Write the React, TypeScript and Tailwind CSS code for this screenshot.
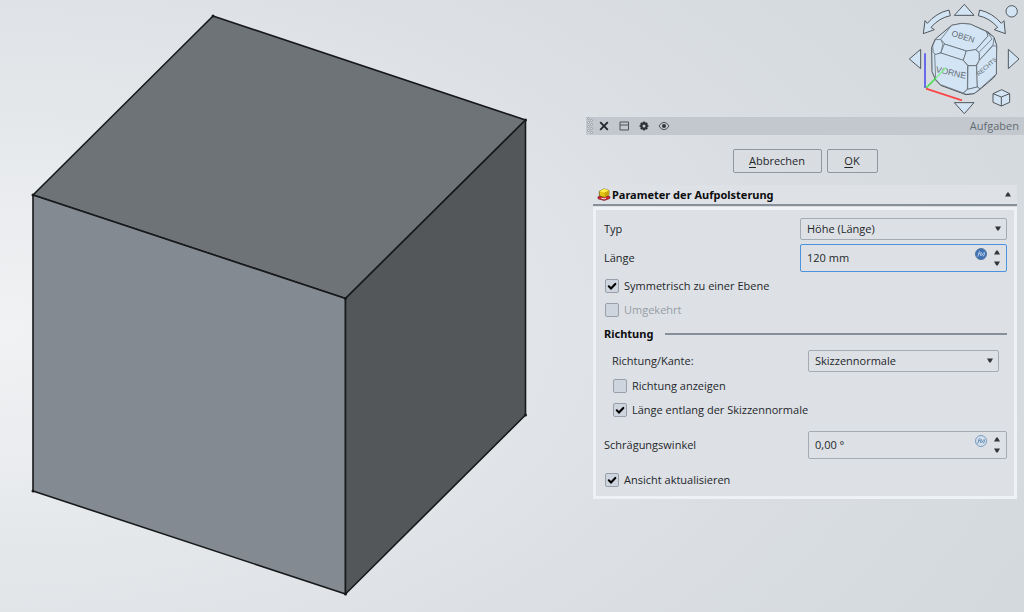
import { ReactNode, useState } from "react";

function Solid() {
  return (
    <svg viewBox="0 0 586 612" className="block h-auto w-full" role="img" aria-label="Aufpolsterung">
      <g stroke="#17191b" strokeWidth="1.600" strokeLinejoin="round">
        <polygon points="213,16 525.500,120 345.500,298.500 33,195" fill="#6e7377" />
        <polygon points="33,195 345.500,298.500 345.500,594 33,491" fill="#848a92" />
        <polygon points="525.500,120 525.500,415 345.500,594 345.500,298.500" fill="#535759" />
      </g>
      <g fill="#17191b">
        <circle cx="213" cy="16" r="1.500" />
        <circle cx="525.500" cy="120" r="1.500" />
        <circle cx="33" cy="195" r="1.500" />
        <circle cx="345.500" cy="298.500" r="1.500" />
        <circle cx="33" cy="491" r="1.500" />
        <circle cx="345.500" cy="594" r="1.500" />
        <circle cx="525.500" cy="415" r="1.500" />
      </g>
    </svg>
  );
}

function NavigationCube() {
  return (
    <svg viewBox="0 0 372 351" className="block h-[117px] w-[124px]" role="img" aria-label="Navigationswürfel">
      <g fill="#d3e5f4" stroke="#50565c" strokeWidth="3" strokeLinejoin="round">
        <polygon points="193,13 222,46 163,46" />
        <polygon points="193,341 222,308 163,308" />
        <polygon points="28,177 62,148 62,206" />
        <polygon points="357,177 325,148 325,206" />
        <circle cx="335" cy="34" r="17" />
        <path d="M147 30 L151 47 Q117 54 93 82 L103 89 L70 101 L75 62 L82 70 Q108 39 147 30Z" />
        <path d="M239 30 L235 47 Q269 54 293 82 L283 89 L316 101 L312 62 L304 70 Q278 39 239 30Z" />
        <path d="M305 269 L329 281 L329 307 L304 318 L279 307 L279 281Z" />
        <path d="M279 281 L304 291 L329 281 M304 291 V318" fill="none" />
        <path d="M155 76 L186 70 L212 73 L264 96 L282 112 L290 136 L289 222 L280 234 L240 268 L222 281 L198 284 L122 256 L107 240 L96 215 L95 142 L106 117Z" />
      </g>
      <g fill="#d3e5f4" stroke="#50565c" strokeWidth="2" strokeLinejoin="round">
        <polygon points="155,76 186,70 212,73 260,95 264,108 228,149 200,153 136,133 122,118" />
        <polygon points="133,132 199,153 190,181 122,159" />
        <polygon points="98,138 106,119 122,118 129,132 123,157 109,165 100,158" />
        <polygon points="104,164 123,159 190,181 203,197 202,268 190,279 122,254 107,238" />
        <polygon points="199,153 227,149 238,159 238,181 228,197 205,197 190,181" />
        <polygon points="204,197 230,197 232,261 203,268" />
        <polygon points="260,95 282,112 279,135 238,181 238,158 228,149 264,108" />
        <polyline points="238,156 276,117 264,98" fill="none" />
        <polygon points="230,197 238,181 279,137 290,139 289,222 240,266 232,261" />
        <polygon points="203,268 232,261 240,267 223,280 198,283 190,279" />
      </g>
      <g fill="#646c75" fontFamily="Liberation Sans, sans-serif">
        <text x="153" y="107" fontSize="25" transform="rotate(18 153 107)">OBEN</text>
        <text x="106" y="216" fontSize="26" transform="rotate(13 106 216)">VORNE</text>
        <text x="236" y="229" fontSize="18" transform="rotate(-41 236 229)">RECHTS</text>
      </g>
      <g fill="none" strokeWidth="5">
        <path d="M75 160 V264" stroke="#5454ea" />
        <path d="M78 264 L108 234" stroke="#42e04a" />
        <path d="M108 234 L138 203" stroke="#8eeb9c" />
        <path d="M78 266 L186 301" stroke="#fa4646" />
      </g>
    </svg>
  );
}

function Caret({ up = false }: { up?: boolean }) {
  return (
    <svg viewBox="0 0 6 5" className="block h-[5px] w-1.5" aria-hidden="true">
      <path d={up ? "M0 4.500 L2.300 .5 H3.700 L6 4.500Z" : "M0 .5 H6 L3.700 4.500 H2.300Z"} fill="#33373b" />
    </svg>
  );
}

function CheckRow({ label, on = false, disabled = false }: { label: string; on?: boolean; disabled?: boolean }) {
  const [checked, setChecked] = useState(on);
  return (
    <label
      className={disabled ? "flex h-6 items-center gap-[5px] pl-px text-[#969ca4]" : "flex h-6 items-center gap-[5px] pl-px"}
    >
      <span className="grid place-items-center">
        <input
          type="checkbox"
          checked={checked}
          disabled={disabled}
          onChange={(e) => setChecked(e.target.checked)}
          className="col-start-1 row-start-1 size-3.5 appearance-none rounded-xs border border-[#989fa8] bg-[#cfd5de]"
        />
        {checked && (
          <svg viewBox="0 0 10 10" className="pointer-events-none col-start-1 row-start-1 size-2.5" aria-hidden="true">
            <path d="M1.800 5.300 L4 7.400 L8.300 2.900" fill="none" stroke="#000" strokeWidth="2.100" strokeLinecap="round" />
          </svg>
        )}
      </span>
      {label}
    </label>
  );
}

function SelectBox({ id, value }: { id: string; value: string }) {
  return (
    <div className="grid items-center">
      <select
        id={id}
        className="col-start-1 row-start-1 h-[22px] w-full appearance-none rounded-xs border border-[#a5abb2] bg-[#dde1e6] pl-1.5 leading-5"
      >
        <option>{value}</option>
      </select>
      <span className="pointer-events-none col-start-1 row-start-1 mr-1.5 mb-0.5 justify-self-end">
        <Caret />
      </span>
    </div>
  );
}

function SpinBox({ id, value, active = false }: { id: string; value: string; active?: boolean }) {
  return (
    <div
      className={
        active
          ? "flex h-7 w-full rounded-xs border border-[#4b93dc] pr-1.5 pl-1.5"
          : "flex h-7 w-full rounded-xs border border-[#a5abb2] pr-1.5 pl-1.5"
      }
    >
      <input id={id} defaultValue={value} className="min-w-0 flex-1 bg-transparent outline-none" />
      <button type="button" aria-label="Formel" className="mt-[3px] mr-[7px] size-3">
        <svg viewBox="0 0 36 36" className="block size-3">
          <circle cx="18" cy="18" r="16.500" fill={active ? "#3f71b5" : "#d5dfea"} stroke={active ? "#54779f" : "#7b9cc0"} strokeWidth="3" />
          <g fill="none" stroke={active ? "#bcd2ec" : "#658eb9"} strokeWidth="2.800">
            <path d="M8 26 L13 11 H16 M10 17 H15" />
            <path d="M19 12 Q16 18 17 24 M20 16 L25 23 M25 16 L19 23 M27 12 Q31 18 25 25" />
          </g>
        </svg>
      </button>
      <span className="flex flex-col justify-between py-[5px]">
        <button type="button" aria-label="Erhöhen">
          <Caret up />
        </button>
        <button type="button" aria-label="Verringern">
          <Caret />
        </button>
      </span>
    </div>
  );
}

function Field({ id, label, children }: { id: string; label: string; children: ReactNode }) {
  return (
    <div className="flex items-center">
      <label htmlFor={id} className="flex-1">
        {label}
      </label>
      {children}
    </div>
  );
}

function PadIcon() {
  return (
    <svg viewBox="0 0 42 38" className="h-[13px] w-3.5" aria-hidden="true">
      <path d="M3 26 L20 20 L39 25 L38 31 L22 37 L3 32Z" fill="#d32231" stroke="#6b2025" strokeWidth="2" />
      <path d="M7 9 L21 2 L36 7 V20 L22 28 L7 23Z" fill="#e5c514" stroke="#5c4b13" strokeWidth="2" />
      <path d="M7 9 L21 2 L36 7 L23 13Z" fill="#fff04a" />
      <path d="M23 13 L36 7 V20 L22 28Z" fill="#c9a70e" />
      <path d="M13 30 L22 32 L27 30" fill="none" stroke="#eef0f2" strokeWidth="3" />
    </svg>
  );
}

function TitleBar() {
  return (
    <header className="flex h-[18px] items-center bg-[#c2c8ce] pr-[5px] pl-px text-[#656b73]">
      <svg viewBox="0 0 6 18" className="h-[18px] w-1.5" aria-hidden="true">
        <g fill="#dde1e5" stroke="#858c94" strokeWidth=".6">
          {[1.5, 5.5, 9.5, 13.5].map((y) => (
            <g key={y}>
              <circle cx="1.500" cy={y} r="1" />
              <circle cx="4.500" cy={y + 2} r="1" />
            </g>
          ))}
        </g>
      </svg>
      <div className="ml-[5px] flex flex-1 gap-2">
        <button type="button" aria-label="Schließen">
          <svg viewBox="0 0 12 12" className="size-3">
            <path d="M2.200 2.200 L9.800 9.800 M9.800 2.200 L2.200 9.800" stroke="#24282c" strokeWidth="1.900" />
          </svg>
        </button>
        <button type="button" aria-label="Andocken">
          <svg viewBox="0 0 12 12" className="size-3">
            <path d="M2 2 H10.500 V10 H2Z M2 5 H10.500" fill="none" stroke="#4d5359" />
          </svg>
        </button>
        <button type="button" aria-label="Einstellungen">
          <svg viewBox="0 0 12 12" className="size-3">
            <circle cx="6" cy="6" r="2.600" fill="none" stroke="#2d3136" strokeWidth="2.200" />
            <path
              d="M6 1.500 V3 M6 9 V10.500 M1.500 6 H3 M9 6 H10.500 M2.800 2.800 L4 4 M8 8 L9.200 9.200 M9.200 2.800 L8 4 M4 8 L2.800 9.200"
              stroke="#2d3136"
              strokeWidth="1.700"
            />
          </svg>
        </button>
        <button type="button" aria-label="Anzeigen">
          <svg viewBox="0 0 12 12" className="size-3">
            <path d="M1 6 Q3 2.300 6 2.300 T11 6 Q9 9.700 6 9.700 T1 6Z" fill="none" stroke="#4d5359" strokeWidth="1" />
            <circle cx="6" cy="6" r="2" fill="#30353a" />
          </svg>
        </button>
      </div>
      <h1>Aufgaben</h1>
    </header>
  );
}

export default function App() {
  return (
    <main className="flex min-h-screen items-start bg-[radial-gradient(ellipse_120%_108%_at_0%_54%,#f1f2f4_0%,#e4e7ea_35%,#dadee2_65%,#d3d8dd_100%)] font-['Open_Sans','Noto_Sans',sans-serif] text-[11px] leading-4 text-[#24272a]">
      <div className="min-w-0 flex-1">
        <Solid />
      </div>
      <aside className="w-[438px] shrink-0">
        <div className="flex justify-end">
          <NavigationCube />
        </div>
        <TitleBar />
        <div className="flex justify-center gap-[5px] pt-3.5 pb-3">
          <button type="button" className="h-6 w-[89px] rounded-xs border border-[#8f969e]">
            <u className="underline-offset-2">A</u>bbrechen
          </button>
          <button type="button" className="h-6 w-[51px] rounded-xs border border-[#8f969e]">
            <u className="underline-offset-2">O</u>K
          </button>
        </div>
        <section className="mx-[7px]">
          <h2 className="flex h-[21px] items-center border-b-2 border-[#87909a] bg-[#dee2e6] pr-1.5 pl-1 font-['Noto_Sans',sans-serif] font-bold text-[#0c0d0e]">
            <PadIcon />
            <span className="ml-px flex-1">Parameter der Aufpolsterung</span>
            <button type="button" aria-label="Einklappen">
              <Caret up />
            </button>
          </h2>
          <form className="mt-px border-3 border-[#eff2f5] bg-[#dde1e6] pt-2 pr-[7px] pb-1 pl-2">
            <Field id="type" label="Typ">
              <div className="w-[207px]">
                <SelectBox id="type" value="Höhe (Länge)" />
              </div>
            </Field>
            <div className="mt-1 mb-0.5">
              <Field id="length" label="Länge">
                <div className="w-[207px]">
                  <SpinBox id="length" value="120 mm" active />
                </div>
              </Field>
            </div>
            <CheckRow label="Symmetrisch zu einer Ebene" on />
            <CheckRow label="Umgekehrt" disabled />
            <fieldset>
              <legend className="flex h-6 w-full items-center gap-3 font-['Noto_Sans',sans-serif] font-bold text-[#0c0d0e]">
                Richtung
                <span className="h-0.5 flex-1 bg-[#87909a]" />
              </legend>
              <div className="mt-1 mb-0.5 px-2">
                <Field id="edge" label="Richtung/Kante:">
                  <div className="w-[191px]">
                    <SelectBox id="edge" value="Skizzennormale" />
                  </div>
                </Field>
              </div>
              <div className="px-2">
                <CheckRow label="Richtung anzeigen" />
                <CheckRow label="Länge entlang der Skizzennormale" on />
              </div>
            </fieldset>
            <div className="my-[9px]">
              <Field id="angle" label="Schrägungswinkel">
                <div className="w-[199px]">
                  <SpinBox id="angle" value="0,00 °" />
                </div>
              </Field>
            </div>
            <CheckRow label="Ansicht aktualisieren" on />
          </form>
        </section>
      </aside>
    </main>
  );
}
